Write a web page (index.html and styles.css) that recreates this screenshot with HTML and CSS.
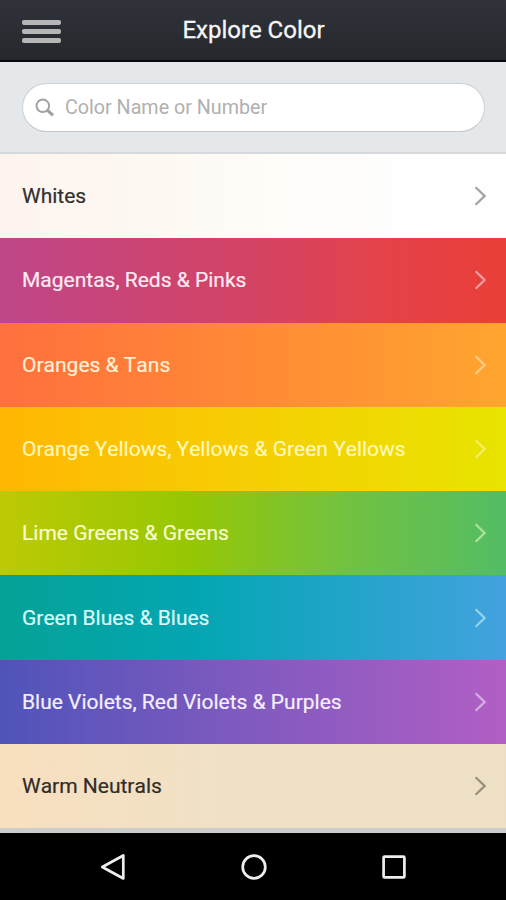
FILE: index.html
```html
<!DOCTYPE html>
<html lang="en">
<head>
    <title>Explore Color</title>
    <meta charset="UTF-8">
    <meta name="viewport" content="width=device-width">
    <link rel="stylesheet" href="styles.css">
</head>
<body>

<svg class="symbols">
    <symbol id="chevron" viewBox="0 0 12 20">
        <path d="M1.6 1.2 L10.6 10 L1.6 18.8" fill="none" stroke="currentColor" stroke-width="2.2"/>
    </symbol>
</svg>

<header class="header">
    <div class="menu">
        <span></span>
        <span></span>
        <span></span>
    </div>
    <h1 class="title">Explore Color</h1>
</header>

<div class="search">
    <label class="field">
        <svg class="glass" width="20" height="20" viewBox="0 0 20 20">
            <circle cx="7.8" cy="7.8" r="6.3" fill="none" stroke="#a2a2a2" stroke-width="2"/>
            <path d="M12.3 12.1 L18 17.4" stroke="#a2a2a2" stroke-width="3.2"/>
        </svg>
        <input class="input" type="text" placeholder="Color Name or Number">
    </label>
</div>

<div class="colors">
    <div class="row whites"><span>Whites</span><svg class="arrow"><use href="#chevron"/></svg></div>
    <div class="row reds"><span>Magentas, Reds &amp; Pinks</span><svg class="arrow"><use href="#chevron"/></svg></div>
    <div class="row oranges"><span>Oranges &amp; Tans</span><svg class="arrow"><use href="#chevron"/></svg></div>
    <div class="row yellows"><span>Orange Yellows, Yellows &amp; Green Yellows</span><svg class="arrow"><use href="#chevron"/></svg></div>
    <div class="row greens"><span>Lime Greens &amp; Greens</span><svg class="arrow"><use href="#chevron"/></svg></div>
    <div class="row blues"><span>Green Blues &amp; Blues</span><svg class="arrow"><use href="#chevron"/></svg></div>
    <div class="row violets"><span>Blue Violets, Red Violets &amp; Purples</span><svg class="arrow"><use href="#chevron"/></svg></div>
    <div class="row neutrals"><span>Warm Neutrals</span><svg class="arrow"><use href="#chevron"/></svg></div>
</div>

<nav class="navbar">
    <svg width="28" height="28" viewBox="0 0 28 28">
        <path d="M24.3 2.5 V25.5 L3.3 14 Z"/>
    </svg>
    <svg width="28" height="28" viewBox="0 0 28 28">
        <circle cx="14" cy="14" r="11.3"/>
    </svg>
    <svg width="28" height="28" viewBox="0 0 28 28">
        <rect x="3.6" y="3.6" width="20.8" height="20.8" rx="1"/>
    </svg>
</nav>

</body>
</html>
```
FILE: styles.css
```css
*{
    box-sizing: border-box;
}

body{
    margin: 0;
    height: 900px;
    display: flex;
    flex-direction: column;
    overflow: hidden;
    background-color: #cccdcb;
    font-family: Roboto, "Liberation Sans", sans-serif;
}

.symbols{
    display: none;
}

.header{
    height: 62px;
    padding: 0 22px;
    display: grid;
    grid-template-columns: 39px 1fr 39px;
    align-items: center;
    background: linear-gradient(#30333a, #24272b);
    border-bottom: 2px solid #08090b;
}

.menu{
    display: grid;
    gap: 4px;
    padding-top: 2px;
}

.menu span{
    height: 5px;
    border-radius: 2px;
    background-color: #b6b6b6;
}

.title{
    margin: 0;
    padding-left: 1px;
    text-align: center;
    color: #f6f6f6;
    font-size: 24px;
    font-weight: normal;
    -webkit-text-stroke: .3px;
}

.search{
    height: 92px;
    padding: 21px 21px 0 22px;
    background-color: #e5e8eb;
    border-bottom: 2px solid #d5d9db;
}

.field{
    height: 49px;
    padding-left: 12px;
    display: flex;
    align-items: center;
    border: 1px solid #cdcfd1;
    border-bottom-color: #c4c6c8;
    border-radius: 25px;
    background-color: #fff;
}

.input{
    flex: 1;
    min-width: 0;
    margin-left: 10px;
    padding: 0;
    border: 0;
    outline: 0;
    background: none;
    font: 19.7px Roboto, "Liberation Sans", sans-serif;
}

.input::placeholder{
    color: #b0b0b0;
}

.colors{
    height: 674.2px;
    display: grid;
    grid-template-rows: repeat(8, 1fr);
}

.row{
    padding: 0 20px 0 22px;
    display: flex;
    align-items: center;
    justify-content: space-between;
    color: #fff;
    font-size: 21px;
    font-kerning: none;
    -webkit-text-stroke: .2px;
}

.arrow{
    width: 12px;
    height: 20px;
    opacity: .55;
}

.whites{
    color: #303030;
    background: linear-gradient(to right, #fef4ef, #fdf8f2 30%, #fffdf9 55%, #fefefe 80%);
}

.reds{
    color: #fdeaf2;
    background: linear-gradient(to right, #bf4689, #d44364 50%, #e4424a 75%, #e93f38);
}

.oranges{
    color: #fff0d6;
    background: linear-gradient(to right, #ff703e, #ff8a35 50%, #ffa52f);
}

.yellows{
    color: #fff8b8;
    background: linear-gradient(to right, #ffb703, #f6cf04 50%, #e8e400);
}

.greens{
    color: #f8fdd2;
    background: linear-gradient(to right, #bdca05, #97c703 37%, #72c240 68%, #53bd64);
}

.blues{
    color: #dcfbfb;
    background: linear-gradient(to right, #04a296, #04a6b4 40%, #43a2df);
}

.violets{
    color: #f5effd;
    background: linear-gradient(to right, #4f54b9, #7c5abf 45%, #b15fc4);
}

.neutrals{
    color: #302c28;
    background: linear-gradient(to right, #f8dfbf, #efe1c6 50%, #eee0c4);
}

.whites .arrow,
.neutrals .arrow{
    opacity: .45;
}

.navbar{
    height: 67px;
    margin-top: auto;
    padding: 0 98px 0 99px;
    display: flex;
    align-items: center;
    justify-content: space-between;
    background-color: #000;
}

.navbar svg{
    fill: none;
    stroke: #eee;
    stroke-width: 2.7;
    stroke-linejoin: round;
}
```
